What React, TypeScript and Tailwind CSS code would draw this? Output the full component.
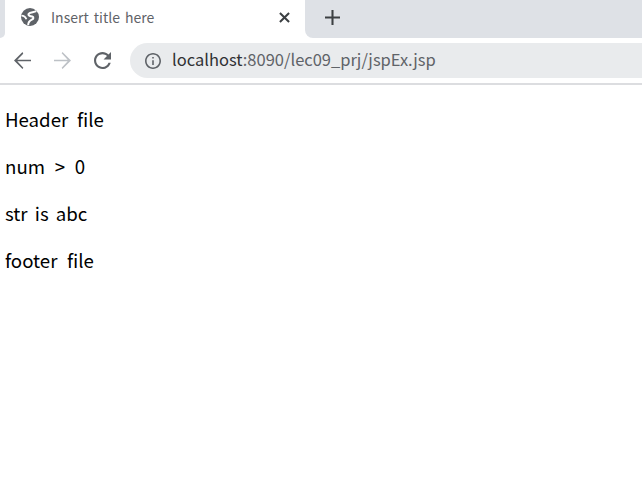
import React from "react";

const font = { fontFamily: '"Noto Sans CJK KR", "Noto Sans", sans-serif' };

function Globe() {
  return (
    <svg width="18" height="18" viewBox="2 2 20 20">
      <circle cx="12" cy="12" r="10" fill="#5f6368" />
      <path d="M19 5.5C16 7 12 6.5 10.5 8.5 9.5 10 12 11 14.5 11.5 16.5 12 16 14 14 15 12 16 10 17 10 21" stroke="#ffffff" strokeWidth="2.2" fill="none" />
      <path d="M2.5 10.5C5 10.5 7 12 8 14.5" stroke="#ffffff" strokeWidth="2" fill="none" />
    </svg>
  );
}

export default function App() {
  return (
    <div className="min-h-[498px] bg-white text-black" style={font}>
      <div className="h-[38px] flex">
        <div className="w-[5px] h-[38px] bg-[#dee1e6] rounded-br-[8px]" />
        <div className="w-[300px] h-[38px] bg-white flex items-center pl-[16px] pr-[15px] pb-[4px]">
          <Globe />
          <span className="ml-[12px] text-[14px] [word-spacing:2px] text-[#5f6368] leading-none flex-1 whitespace-nowrap">Insert title here</span>
          <svg width="11" height="11" viewBox="0 0 12 12" stroke="#3c4043" strokeWidth="2.2" fill="none">
            <path d="M1 1l10 10M11 1L1 11" />
          </svg>
        </div>
        <div className="flex-1 h-[38px] bg-[#dee1e6] rounded-bl-[8px] flex items-center pl-[20px] pb-[4px]">
          <svg width="15" height="15" viewBox="0 0 16 16" stroke="#3c4043" strokeWidth="2.2" fill="none">
            <path d="M8 0v16M0 8h16" />
          </svg>
        </div>
      </div>
      <div className="h-[47px] border-b-2 border-[#dcdde0] flex items-center">
        <div className="w-[130px] flex items-center pl-[14px] gap-[23px]">
          <svg width="17" height="17" viewBox="4 4 16 16" fill="#5f6368">
            <path d="M20 11.2H7.1l5.6-5.6L12 4l-8 8 8 8 .8-1.2-5.7-6H20z" />
          </svg>
          <svg width="17" height="17" viewBox="4 4 16 16" fill="#bdc1c6">
            <path d="M12 4l-.8 1.2 5.7 6H4v1.6h12.9l-5.7 6L12 20l8-8z" />
          </svg>
          <svg width="17" height="17" viewBox="4 4 16 16" fill="#5f6368">
            <path d="M17.65 6.35C16.2 4.9 14.21 4 12 4c-4.42 0-7.99 3.58-7.99 8s3.57 8 7.99 8c3.73 0 6.84-2.55 7.73-6h-2.08c-.82 2.33-3.04 4-5.65 4-3.31 0-6-2.69-6-6s2.69-6 6-6c1.66 0 3.14.69 4.22 1.78L13 11h7V4l-2.35 2.35z" />
          </svg>
        </div>
        <div className="flex-1 h-[35px] bg-[#e9ebed] rounded-l-full flex items-center pl-[15px]">
          <svg width="16" height="16" viewBox="2 2 20 20" fill="#5f6368">
            <path d="M11 7h2v2h-2zm0 4h2v6h-2zm1-9C6.48 2 2 6.48 2 12s4.48 10 10 10 10-4.48 10-10S17.52 2 12 2zm0 18c-4.41 0-8-3.59-8-8s3.59-8 8-8 8 3.59 8 8-3.59 8-8 8z" />
          </svg>
          <span className="ml-[11px] text-[16.5px] leading-none whitespace-nowrap text-[#5f6368] -translate-y-px">
            <span className="text-[#303134]">localhost</span>:8090/lec09_prj/jspEx.jsp
          </span>
        </div>
      </div>
      <div className="pl-[5px] pt-[20px] text-[18.67px] leading-[27px] flex flex-col gap-[20px]">
        <p className="[word-spacing:4.5px]">Header file</p>
        <p className="[word-spacing:5.5px]">num &gt; 0</p>
        <p className="[word-spacing:3px]">str is abc</p>
        <p className="[word-spacing:5.5px]">footer file</p>
      </div>
    </div>
  );
}
